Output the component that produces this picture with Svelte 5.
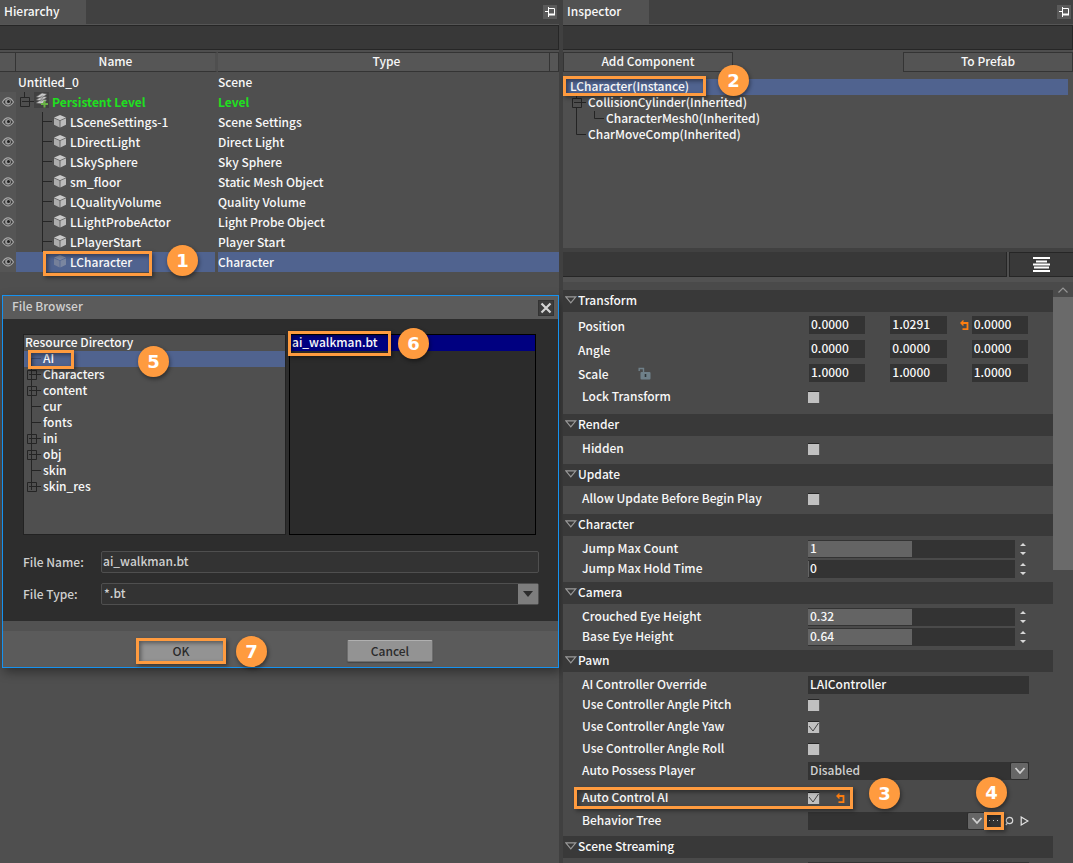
<script lang="ts">
  type Callout = { n: number; x: number; y: number; w: number; h: number; bx: number; by: number };

  type Field = {
    label: string;
    kind: 'vector' | 'check' | 'number' | 'text' | 'select' | 'asset';
    values?: string[];
    value?: string;
    fill?: number;
    checked?: boolean;
    lock?: boolean;
    changed?: number;
    callout?: Callout;
  };

  const objects = [
    ['LSceneSettings-1', 'Scene Settings'],
    ['LDirectLight', 'Direct Light'],
    ['LSkySphere', 'Sky Sphere'],
    ['sm_floor', 'Static Mesh Object'],
    ['LQualityVolume', 'Quality Volume'],
    ['LLightProbeActor', 'Light Probe Object'],
    ['LPlayerStart', 'Player Start'],
    ['LCharacter', 'Character']
  ];

  const folders = [
    { name: 'AI', expandable: false },
    { name: 'Characters', expandable: true },
    { name: 'content', expandable: true },
    { name: 'cur', expandable: false },
    { name: 'fonts', expandable: false },
    { name: 'ini', expandable: true },
    { name: 'obj', expandable: true },
    { name: 'skin', expandable: false },
    { name: 'skin_res', expandable: true }
  ];

  const groups: { title: string; fields: Field[] }[] = [
    {
      title: 'Transform',
      fields: [
        { label: 'Position', kind: 'vector', values: ['0.0000', '1.0291', '0.0000'], changed: 2 },
        { label: 'Angle', kind: 'vector', values: ['0.0000', '0.0000', '0.0000'] },
        { label: 'Scale', kind: 'vector', values: ['1.0000', '1.0000', '1.0000'], lock: true },
        { label: 'Lock Transform', kind: 'check' }
      ]
    },
    { title: 'Render', fields: [{ label: 'Hidden', kind: 'check' }] },
    { title: 'Update', fields: [{ label: 'Allow Update Before Begin Play', kind: 'check' }] },
    {
      title: 'Character',
      fields: [
        { label: 'Jump Max Count', kind: 'number', value: '1', fill: 50 },
        { label: 'Jump Max Hold Time', kind: 'number', value: '0', fill: 0 }
      ]
    },
    {
      title: 'Camera',
      fields: [
        { label: 'Crouched Eye Height', kind: 'number', value: '0.32', fill: 50 },
        { label: 'Base Eye Height', kind: 'number', value: '0.64', fill: 50 }
      ]
    },
    {
      title: 'Pawn',
      fields: [
        { label: 'AI Controller Override', kind: 'text', value: 'LAIController' },
        { label: 'Use Controller Angle Pitch', kind: 'check' },
        { label: 'Use Controller Angle Yaw', kind: 'check', checked: true },
        { label: 'Use Controller Angle Roll', kind: 'check' },
        { label: 'Auto Possess Player', kind: 'select', value: 'Disabled' },
        {
          label: 'Auto Control AI',
          kind: 'check',
          checked: true,
          changed: 0,
          callout: { n: 3, x: 11, y: -1, w: 279, h: 22, bx: 306, by: -10 }
        },
        { label: 'Behavior Tree', kind: 'asset' }
      ]
    },
    { title: 'Scene Streaming', fields: [{ label: '', kind: 'text', value: '' }] }
  ];

  const slug = (s: string) => 'f-' + s.toLowerCase().replace(/ /g, '-');
</script>

{#snippet callout(c: Callout)}
  <span class="frame" style="left:{c.x}px;top:{c.y}px;width:{c.w}px;height:{c.h}px"></span>
  <span class="badge" style="left:{c.bx}px;top:{c.by}px">{c.n}</span>
{/snippet}

{#snippet pin()}
  <button class="pin" aria-label="Pin panel">
    <svg width="14" height="14" viewBox="0 0 14 14" fill="none" stroke="#fff">
      <path d="M2 6.500h3M5.500 2v10M6 3.500h5.500v6" />
      <path d="M6 9.500h6" stroke-width="2" />
    </svg>
  </button>
{/snippet}

{#snippet eye()}
  <svg class="eye" width="12" height="10" viewBox="0 0 12 10">
    <path d="M.5 5Q3 .9 6 .9T11.500 5Q9 8.900 6 8.900T.5 5z" fill="#3a3a3a" stroke="#a8a8a8" stroke-width="1.1" />
    <circle cx="6" cy="4.8" r="2.9" fill="#9a9a9a" />
    <circle cx="6.5" cy="4.6" r="1.5" fill="#1e1e1e" />
  </svg>
{/snippet}

{#snippet chevron()}
  <svg width="12" height="8" viewBox="0 0 12 8" fill="none" stroke="#d0d0d0" stroke-width="1.8">
    <path d="M1.500 1L6 6l4.500-5" />
  </svg>
{/snippet}

{#snippet revert()}
  <svg class="revert" width="9" height="11" viewBox="0 0 9 11" fill="none" stroke="#ff7e10">
    <path d="M1 3h6.500v6.200H2.500" stroke-width="1.800" />
    <path d="M3.500 .5L1 3l2.500 2.500" stroke-width="1.400" />
  </svg>
{/snippet}

<main>
  <section class="panel">
    <header class="tabs">
      <h2>Hierarchy</h2>
      {@render pin()}
    </header>
    <div class="toolbar"></div>
    <table>
      <colgroup>
        <col class="c-eye" />
        <col class="c-name" />
        <col />
        <col class="c-end" />
      </colgroup>
      <thead>
        <tr><th></th><th>Name</th><th class="type">Type</th><th></th></tr>
      </thead>
      <tbody>
        <tr>
          <td></td>
          <td><div class="cell scene">Untitled_0</div></td>
          <td colspan="2">Scene</td>
        </tr>
        <tr class="level">
          <td class="vis">{@render eye()}</td>
          <td>
            <div class="cell">
              <svg width="36" height="20" viewBox="0 0 36 20">
                <path d="M8.500 0v5M4.500 5.500h9v9h-9zM6 9.500h12" fill="none" stroke="#262626" />
                <rect x="18" y="0" width="15" height="16" fill="#414141" />
                <path d="M20 11l6-4 5 1-5 4zM20 8l6-4 5 1-5 4zM20 5l6-4 5 1-5 4z" fill="#c9c9c9" stroke="#555" stroke-width=".6" />
                <path d="M28.500 8.500v7M25 12h7" stroke="#68b244" stroke-width="2" />
              </svg>
              Persistent Level
            </div>
          </td>
          <td colspan="2">Level</td>
        </tr>
        {#each objects as [name, type], i}
          {@const selected = i === objects.length - 1}
          <tr class:selected>
            <td class="vis">{@render eye()}</td>
            <td>
              <div class="cell">
                <svg width="54" height="20" viewBox="0 0 54 20">
                  {#if !selected}
                    <path d="M26.500 0v20M26 9.500h10" fill="none" stroke="#262626" />
                  {/if}
                  <g opacity={selected ? 0.4 : 1}>
                    <path d="M44 3l6 2.500-6 2.700-6-2.700z" fill="#c8c8c8" />
                    <path d="M38 6.300l5.600 2.400v6.800L38 12.800z" fill="#acacac" />
                    <path d="M50 6.300l-5.600 2.400v6.800l5.600-2.700z" fill="#bababa" />
                  </g>
                </svg>
                {name}
                {#if selected}
                  {@render callout({ n: 1, x: 27, y: -1, w: 109, h: 25, bx: 151, by: -7 })}
                {/if}
              </div>
            </td>
            <td colspan="2">{type}</td>
          </tr>
        {/each}
      </tbody>
    </table>

    <div class="dialog" role="dialog" aria-label="File Browser">
      <div class="title">
        <span>File Browser</span>
        <button aria-label="Close">
          <svg width="12" height="12" viewBox="0 0 12 12" stroke="#d4d4d4" stroke-width="2.200">
            <path d="M1.500 1.500l9 9M10.500 1.500l-9 9" />
          </svg>
        </button>
      </div>
      <div class="body">
        <div class="lists">
          <ul class="folders">
            <li class="root">Resource Directory</li>
            {#each folders as folder, i}
              <li class:selected={i === 0}>
                <svg width="19" height="16" viewBox="0 0 19 16" fill="none" stroke={i === 0 ? '#3c4a70' : '#242424'}>
                  <path d="M7.500 {i === 0 ? 8 : 0}V{i === folders.length - 1 ? 8 : 16}M7 7.500h10" />
                  {#if folder.expandable}
                    <path d="M3.500 3.500h9v9h-9zM5 7.500h6M7.500 5v6" />
                  {/if}
                </svg>
                {folder.name}
                {#if i === 0}
                  {@render callout({ n: 5, x: 4, y: -1, w: 46, h: 19, bx: 114, by: -5 })}
                {/if}
              </li>
            {/each}
          </ul>
          <ul class="files">
            <li>
              ai_walkman.bt
              {@render callout({ n: 6, x: -2, y: -4, w: 103, h: 25, bx: 108, by: -7 })}
            </li>
          </ul>
        </div>
        <div class="entry">
          <label for="file-name">File Name:</label>
          <input id="file-name" type="text" value="ai_walkman.bt" />
        </div>
        <div class="entry">
          <label for="file-type">File Type:</label>
          <div class="combo">
            <select id="file-type"><option>*.bt</option></select>
            <span class="arrow">
              <svg width="10" height="6" viewBox="0 0 10 6"><path d="M0 0h10L5 6z" fill="#2c2c2c" /></svg>
            </span>
          </div>
        </div>
      </div>
      <div class="actions">
        <div class="ok">
          <button>OK</button>
          {@render callout({ n: 7, x: -2, y: -2, w: 90, h: 26, bx: 98, by: -4 })}
        </div>
        <button>Cancel</button>
      </div>
    </div>
  </section>

  <section class="panel inspector">
    <header class="tabs">
      <h2>Inspector</h2>
      {@render pin()}
    </header>
    <div class="toolbar"></div>
    <div class="commands">
      <button>Add Component</button>
      <button>To Prefab</button>
    </div>
    <ul class="components">
      <li class="selected instance">
        LCharacter(Instance)
        {@render callout({ n: 2, x: 0, y: -3, w: 143, h: 20, bx: 155, by: -14 })}
      </li>
      <li>
        <svg width="25" height="16" viewBox="0 0 25 16" fill="none" stroke="#242424">
          <path d="M13.500 0v3M9.500 3.500h9v9h-9zM11 7.500h12M13.500 13v3" />
        </svg>
        CollisionCylinder(Inherited)
      </li>
      <li>
        <svg width="43" height="16" viewBox="0 0 43 16" fill="none" stroke="#242424">
          <path d="M13.500 0v16M31.500 0v7.500H41" />
        </svg>
        CharacterMesh0(Inherited)
      </li>
      <li>
        <svg width="25" height="16" viewBox="0 0 25 16" fill="none" stroke="#242424">
          <path d="M13.500 0v7.500H23" />
        </svg>
        CharMoveComp(Inherited)
      </li>
    </ul>
    <div class="filter">
      <input type="text" aria-label="Filter properties" />
      <button aria-label="Options">
        <svg width="17" height="15" viewBox="0 0 17 15" stroke="#fff" stroke-width="2">
          <path d="M0 1h17M3 4.500h11M0 7.500h17M1 10.500h15M0 14h17" />
        </svg>
      </button>
    </div>
    <div class="scroller">
      <div class="groups">
        {#each groups as group}
          <section class="group">
            <h3>
              <svg width="12" height="8" viewBox="0 0 12 8" fill="none" stroke="#9a9a9a" stroke-width="1.200">
                <path d="M.8 .8h10L5.800 6.800z" />
              </svg>
              {group.title}
            </h3>
            <div class="fields">
              {#each group.fields as field}
                {@const id = slug(field.label)}
                <div class="field {field.kind}" class:spaced={field.callout}>
                  <label for={id}>
                    {field.label}
                    {#if field.lock}
                      <svg class="lock" width="13" height="13" viewBox="0 0 13 13">
                        <path d="M1.200 4V1.500h4.300V5" fill="none" stroke="#6f8089" stroke-width="1.400" />
                        <rect x="2.500" y="5" width="10" height="7.500" rx="1" fill="#6f8089" />
                        <path d="M7.500 7v3" stroke="#2e3538" stroke-width="1.600" />
                      </svg>
                    {/if}
                  </label>
                  {#if field.kind === 'vector'}
                    {#each field.values ?? [] as v, i}
                      <div class="axis">
                        <span class="slot">
                          {#if field.changed === i}{@render revert()}{/if}
                        </span>
                        <input type="text" id={i === 0 ? id : undefined} aria-label="{field.label} {i}" value={v} />
                      </div>
                    {/each}
                  {:else if field.kind === 'check'}
                    <span class="tick">
                      <input type="checkbox" {id} checked={field.checked} />
                      <svg width="12" height="12" viewBox="0 0 12 12" fill="none" stroke="#444">
                        <path d="M1 5l4 5L10.500 2" />
                      </svg>
                    </span>
                    {#if field.changed === 0}{@render revert()}{/if}
                  {:else if field.kind === 'number'}
                    <div class="slider">
                      <span class="fill" style="width:{field.fill}%"></span>
                      <input type="text" {id} value={field.value} />
                    </div>
                    <svg class="spin" width="8" height="14" viewBox="0 0 8 14" fill="#d8d8d8">
                      <path d="M1 4l3-3 3 3zM1 10l3 3 3-3z" />
                    </svg>
                  {:else if field.kind === 'text'}
                    <input type="text" {id} aria-label={field.label || 'Streaming'} value={field.value} />
                  {:else if field.kind === 'select'}
                    <div class="combo">
                      <select {id}><option>{field.value}</option></select>
                      <span class="arrow">{@render chevron()}</span>
                    </div>
                  {:else}
                    <div class="combo">
                      <select {id}><option></option></select>
                      <span class="arrow">{@render chevron()}</span>
                    </div>
                    <div class="browse">
                      <button aria-label="Browse">
                        <svg width="9" height="2" viewBox="0 0 9 2" fill="#ccc">
                          <path d="M0 0h1v1H0zM4 0h1v1H4zM8 0h1v1H8z" />
                        </svg>
                      </button>
                      {@render callout({ n: 4, x: -2, y: 0, w: 20, h: 18, bx: -10, by: -35 })}
                    </div>
                    <button class="small" aria-label="Find">
                      <svg width="9" height="10" viewBox="0 0 9 10" fill="none" stroke="#d8d8d8" stroke-width="1.200">
                        <circle cx="4.500" cy="4.500" r="3.200" />
                        <path d="M2.500 7L.8 9" />
                      </svg>
                    </button>
                    <button class="small" aria-label="Use">
                      <svg width="9" height="10" viewBox="0 0 9 10" fill="none" stroke="#e4e4e4" stroke-width="1.200">
                        <path d="M1.200 1v8L8 5z" />
                      </svg>
                    </button>
                  {/if}
                  {#if field.callout}{@render callout(field.callout)}{/if}
                </div>
              {/each}
            </div>
          </section>
        {/each}
      </div>
      <div class="scrollbar">
        <svg width="10" height="6" viewBox="0 0 10 6" fill="none" stroke="#969696" stroke-width="1.200">
          <path d="M.5 5.500L5 1l4.500 4.500" />
        </svg>
        <span class="thumb"></span>
      </div>
    </div>
  </section>
</main>

<style>
  :global(body) {
    margin: 0;
    background: #414141;
  }

  main {
    display: grid;
    grid-template-columns: 559fr 510fr;
    gap: 4px;
    height: 100vh;
    overflow: hidden;
    font-family: 'Noto Sans CJK SC', 'Noto Sans', sans-serif;
    font-size: 12px;
    font-weight: 500;
    line-height: 16px;
    color: #f8f8f8;
    background: #404040;
  }

  h2,
  h3,
  ul {
    margin: 0;
    padding: 0;
    font: inherit;
    list-style: none;
  }

  button,
  input,
  select {
    box-sizing: border-box;
    margin: 0;
    padding: 0;
    font: inherit;
    color: inherit;
    border: 0;
    border-radius: 0;
    outline: none;
    appearance: none;
  }

  svg {
    display: block;
    flex: none;
  }

  .panel {
    position: relative;
    display: flex;
    flex-direction: column;
    min-width: 0;
    min-height: 0;
    background: #4f4f4f;
  }

  .tabs {
    display: flex;
    align-items: center;
    justify-content: space-between;
    height: 24px;
    padding-right: 2px;
    background: #414141;
    border-bottom: 1px solid #555;

    & h2 {
      box-sizing: border-box;
      width: 86px;
      padding: 3px 4px 5px;
      background: #525252;
    }
  }

  .pin {
    width: 14px;
    height: 14px;
    background: #5a5a5a;
  }

  .toolbar {
    height: 23px;
    margin-bottom: 2px;
    background: #383838;
    border: 1px solid #262626;
    border-left: 0;
  }

  table {
    width: 100%;
    table-layout: fixed;
    border-spacing: 0;
  }

  .c-eye {
    width: 16px;
  }

  .c-name {
    width: 202px;
  }

  .c-end {
    width: 9px;
  }

  th {
    box-sizing: border-box;
    height: 20px;
    padding: 0 0 2px;
    font-weight: inherit;
    line-height: 16px;
    background: #565656;
    background-clip: padding-box;
    border: 1px solid #343434;
    border-left-width: 0;

    &:nth-child(2) {
      border-right: 3px solid #4f4f4f;
    }
  }

  .type {
    padding-left: 6px;
  }

  td {
    height: 20px;
    padding: 0;
    line-height: 20px;
    white-space: nowrap;
  }

  td:nth-child(2) {
    background-clip: padding-box;
    border-right: 3px solid transparent;
  }

  .vis {
    background: #555;
  }

  .eye {
    margin: 0 auto;
  }

  .cell {
    position: relative;
    display: flex;
    height: 20px;
  }

  .scene {
    padding-left: 2px;
  }

  .level {
    font-weight: 700;
    color: #1fe01f;
  }

  tr.selected td:not(.vis),
  li.selected {
    background-color: #50638f;
  }

  .frame {
    position: absolute;
    z-index: 2;
    box-sizing: border-box;
    pointer-events: none;
    border: 3px solid #ff9b3f;
    box-shadow:
      2px 2px 4px rgb(0 0 0 / 40%),
      inset 2px 2px 4px rgb(0 0 0 / 40%);
  }

  .badge {
    position: absolute;
    z-index: 3;
    width: 31px;
    height: 31px;
    font-family: 'DejaVu Sans', sans-serif;
    font-size: 18px;
    font-weight: 700;
    line-height: 31px;
    color: #fff;
    text-align: center;
    background: #ff9b3f;
    border-radius: 50%;
    box-shadow: 1px 2px 4px rgb(0 0 0 / 45%);
  }

  .dialog {
    position: absolute;
    top: 295px;
    right: 0;
    left: 2px;
    color: #d0d0d0;
    background: #2d2d2d;
    border: 1px solid #1592f0;
    box-shadow: 2px 4px 10px rgb(0 0 0 / 40%);
  }

  .title {
    display: flex;
    align-items: center;
    justify-content: space-between;
    height: 23px;
    padding: 0 4px 0 9px;
    background: #5b5b5b;

    & span {
      padding-bottom: 3px;
    }

    & button {
      display: grid;
      place-items: center;
      width: 16px;
      height: 16px;
      background: #3c3c3c;
      border: 1px solid #333;
    }
  }

  .body {
    display: flex;
    flex-direction: column;
    gap: 10px;
    padding: 15px 19px 16px 20px;
  }

  .lists {
    display: grid;
    grid-template-columns: 263fr 247fr;
    gap: 3px;
    height: 201px;
    padding-right: 3px;
    margin-bottom: 6px;
    color: #f8f8f8;

    & ul {
      border: 1px solid #222;
    }

    & li {
      position: relative;
      display: flex;
      height: 16px;
      line-height: 14px;
    }
  }

  .folders {
    background: #4f4f4f;
  }

  .root {
    padding-left: 1px;
  }

  .lists .files {
    background: #2b2b2b;
    border-color: #000;

    & li {
      padding-left: 2px;
      background: #000080;
    }
  }

  .entry {
    display: flex;
    align-items: center;
    gap: 10px;
    height: 22px;

    & label {
      width: 68px;
      white-space: nowrap;
    }

    & input,
    & .combo {
      box-sizing: border-box;
      flex: 1;
      height: 22px;
      background: #333;
      border: 1px solid #4f4f4f;
      border-radius: 2px;
    }

    & input {
      padding: 0 1px 3px;
    }
  }

  .combo {
    display: flex;
    flex: 1;
    min-width: 0;

    & select {
      flex: 1;
      min-width: 0;
      padding: 0 2px 2px;
      background: transparent;
    }
  }

  .arrow {
    display: grid;
    place-items: center;
    width: 20px;
    background: #7d7d7d;
    pointer-events: none;
  }

  .actions {
    display: flex;
    gap: 123px;
    justify-content: center;
    height: 27px;
    padding: 9px 0 0 10px;
    background: #5b5b5b;
    border-top: 10px solid #525252;

    & button {
      width: 86px;
      height: 22px;
      color: #2b2b2b;
      background: #939393;
      border: 1px solid #6e6e6e;
      border-top-color: #b0b0b0;
      border-radius: 2px;
      box-shadow: 0 1px 1px #444;
    }
  }

  .ok {
    position: relative;
  }

  .commands {
    display: flex;
    justify-content: space-between;
    height: 20px;
    margin-bottom: 7px;

    & button {
      width: 33.333%;
      padding-bottom: 2px;
      background: #545454;
      border: 1px solid #343434;
    }
  }

  .components {
    flex: none;
    min-height: 169px;
    padding-right: 5px;

    & li {
      position: relative;
      display: flex;
      height: 16px;
      line-height: 14px;
    }

    & .instance {
      padding-left: 7px;
    }
  }

  .filter {
    display: flex;
    flex: none;
    gap: 2px;
    height: 25px;
    border-top: 4px solid #414141;
    border-bottom: 5px solid #525252;

    & input {
      flex: 1;
      min-width: 0;
      background: #383838;
      border: solid #262626;
      border-width: 0 1px 1px 0;
    }

    & button {
      display: grid;
      place-items: center;
      width: 64px;
      background: #393939;
      border: 1px solid #262626;
      border-right: 0;
    }
  }

  .scroller {
    display: flex;
    flex: 1;
    min-height: 0;
    overflow: hidden;
    background: #4a4a4a;
  }

  .groups {
    flex: 1;
    min-width: 0;
    padding-top: 8px;
  }

  h3 {
    box-sizing: border-box;
    display: flex;
    gap: 1px;
    align-items: center;
    height: 22px;
    padding: 0 0 2px 2px;
    background: #393939;
  }

  .fields {
    padding: 3px 0;
  }

  .group:first-child .fields {
    padding-bottom: 5px;
  }

  .field {
    position: relative;
    box-sizing: border-box;
    display: flex;
    align-items: center;
    height: 20px;
    padding: 0 24px 0 19px;

    & label {
      flex: 0 0 226px;
      padding-bottom: 2px;
      white-space: nowrap;
    }

    & input[type='text'] {
      width: 100%;
      min-width: 0;
      height: 18px;
      padding: 0 2px 3px;
      background: #333;
    }
  }

  .vector {
    height: 24px;
    padding: 0 25px 4px 15px;

    & label {
      display: flex;
      flex-basis: 206px;
      padding: 2px 0 0;
    }
  }

  .lock {
    margin: 1px 0 0 29px;
  }

  .axis {
    display: flex;
    flex: 1;
    min-width: 0;
  }

  .slot {
    display: flex;
    flex: none;
    align-items: center;
    justify-content: flex-end;
    box-sizing: border-box;
    width: 25px;
    padding-right: 3px;
  }

  .check {
    height: 22px;
    padding-bottom: 2px;

    & .revert {
      margin-left: 16px;
    }
  }

  .spaced {
    margin: 7px 0 1px;
  }

  .tick {
    display: grid;

    & > * {
      grid-area: 1 / 1;
    }

    & input {
      width: 12px;
      height: 12px;
      background: #c0c0c0;
      border-top: 1px solid #262626;
      border-right: 1px solid #5c5c5c;
    }

    & svg {
      pointer-events: none;
      visibility: hidden;
    }

    & input:checked + svg {
      visibility: visible;
    }
  }

  .slider {
    display: grid;
    flex: 1;
    min-width: 0;
    height: 18px;
    background: #333;

    & > * {
      grid-area: 1 / 1;
    }

    & .fill {
      min-width: 1px;
      margin: 1px 0;
      background: #646464;
    }

    & input[type='text'] {
      z-index: 1;
      background: transparent;
    }
  }

  .spin {
    margin: 0 2px 0 4px;
  }

  .field .combo {
    height: 18px;
    color: #d0d0d0;
    background: #333;

    & .arrow {
      box-sizing: border-box;
      width: 19px;
      background: #666;
      border: 1px solid #2c2c2c;
      border-radius: 2px;
    }
  }

  .asset {
    height: 22px;
    padding-bottom: 2px;
  }

  .browse {
    position: relative;
    box-sizing: border-box;
    height: 18px;
    padding: 3px 2px 3px 1px;

    & button {
      display: grid;
      place-items: center;
      width: 13px;
      height: 12px;
      background: #333;
    }
  }

  .small {
    margin-left: 3px;
    background: transparent;

    & + .small {
      margin-left: 6px;
    }
  }

  .scrollbar {
    display: flex;
    flex: none;
    flex-direction: column;
    align-items: center;
    width: 20px;
    background: #4a4a4a;

    & svg {
      margin: 5px 0 4px;
    }
  }

  .thumb {
    width: 20px;
    height: 47%;
    background: #6a6a6a;
  }
</style>
